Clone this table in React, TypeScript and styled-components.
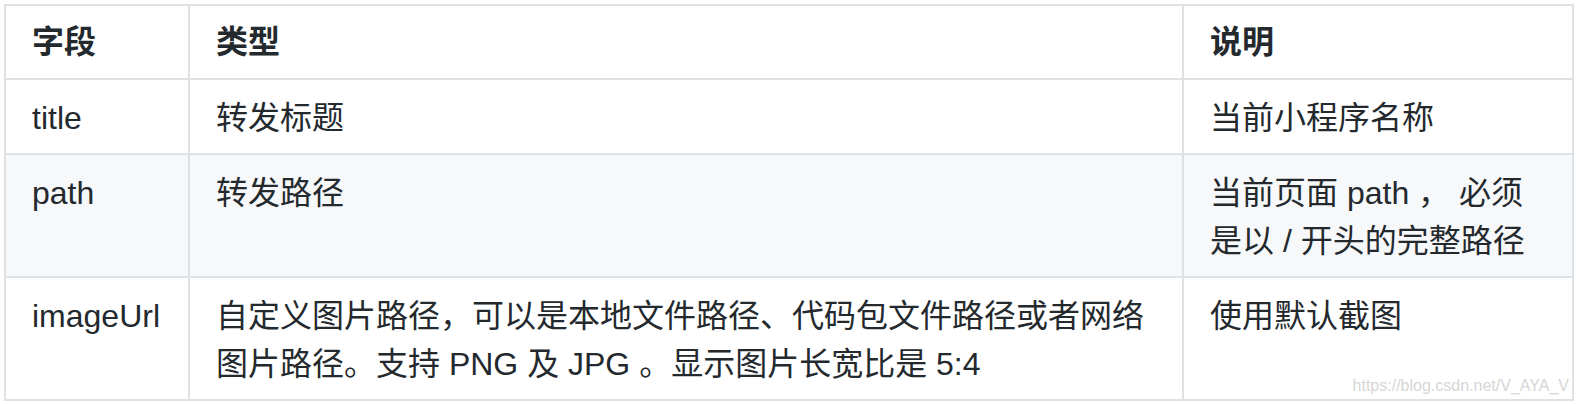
import styled, { createGlobalStyle } from 'styled-components'

const GlobalStyle = createGlobalStyle`
  html, body {
    margin: 0;
    padding: 0;
    background: #ffffff;
  }
`

const rows = [
  { field: 'title', type: '转发标题', desc: '当前小程序名称' },
  { field: 'path', type: '转发路径', desc: '当前页面 path ， 必须是以 / 开头的完整路径' },
  {
    field: 'imageUrl',
    type: '自定义图片路径，可以是本地文件路径、代码包文件路径或者网络图片路径。支持 PNG 及 JPG 。显示图片长宽比是 5:4',
    desc: '使用默认截图',
  },
]

function App () {
  return (
    <StyledPage>
      <GlobalStyle />
      <TableWrap>
        <Table>
          <colgroup>
            <col style={{ width: 184 }} />
            <col style={{ width: 994 }} />
            <col style={{ width: 390 }} />
          </colgroup>
          <thead>
            <tr>
              <HeadCell>字段</HeadCell>
              <HeadCell>类型</HeadCell>
              <HeadCell>说明</HeadCell>
            </tr>
          </thead>
          <tbody>
            {rows.map(({ field, type, desc }, i) => (
              <Row key={field} $striped={i % 2 === 1}>
                <Cell>{field}</Cell>
                <Cell>{type}</Cell>
                <Cell>{desc}</Cell>
              </Row>
            ))}
          </tbody>
        </Table>
        <Watermark>https://blog.csdn.net/V_AYA_V</Watermark>
      </TableWrap>
    </StyledPage>
  )
}

const StyledPage = styled.div`
  padding: 4px;
  font-family: "Liberation Sans", "Noto Sans CJK SC", sans-serif;
  color: #24292e;
`

const TableWrap = styled.div`
  position: relative;
  width: 1568px;
`

const Table = styled.table`
  width: 1568px;
  table-layout: fixed;
  border-collapse: collapse;
  border-spacing: 0;
  font-size: 32px;
  line-height: 48px;
`

const HeadCell = styled.th`
  padding: 12px 26px;
  border: 2px solid #dfe2e5;
  text-align: left;
  font-weight: 700;
  vertical-align: top;
`

const Row = styled.tr<{ $striped: boolean }>`
  background: ${props => (props.$striped ? '#f6f8fa' : '#ffffff')};
`

const Cell = styled.td`
  padding: 14px 26px 11px;
  border: 2px solid #dfe2e5;
  vertical-align: top;
  word-break: break-all;
`

const Watermark = styled.div`
  position: absolute;
  right: 3px;
  bottom: 6px;
  font-size: 16px;
  line-height: 18px;
  color: #d6d6d6;
`

export default App
